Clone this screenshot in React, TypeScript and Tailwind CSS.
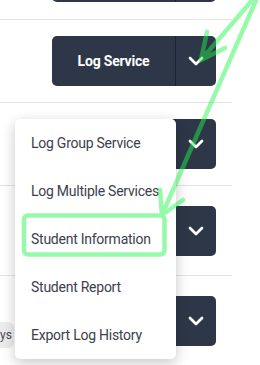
import React from "react";
import { ChevronDown } from "lucide-react";

function SplitButton({ label }: { label?: string }) {
  return (
    <div className="flex h-[50px] w-[164px] shrink-0 rounded-[5px] bg-[#2d3748] text-white">
      <div className="flex w-[123px] items-center justify-center whitespace-nowrap text-[14px] font-bold tracking-[-0.2px]">
        {label}
      </div>
      <div className="flex flex-1 items-center justify-center border-l border-[#1c2330]">
        <ChevronDown size={24} strokeWidth={2.75} />
      </div>
    </div>
  );
}

const items = [
  "Log Group Service",
  "Log Multiple Services",
  "Student Information",
  "Student Report",
  "Export Log History",
];

export default function App() {
  return (
    <div
      className="relative h-[365px] w-[260px] overflow-hidden bg-white"
      style={{ fontFamily: "Roboto, 'Liberation Sans', sans-serif" }}
    >
      <div className="w-[232px]">
        <div className="flex h-[20px] items-end justify-end overflow-hidden border-b border-[#e3e3e3] pb-[17px] pr-4">
          <SplitButton />
        </div>
        <div className="flex justify-end border-b border-[#e3e3e3] py-4 pr-4">
          <SplitButton label="Log Service" />
        </div>
        <div className="flex justify-end border-b border-[#e3e3e3] py-4 pr-4">
          <SplitButton />
        </div>
        <div className="flex h-[90px] justify-end border-b border-[#e3e3e3] pt-5 pr-4">
          <SplitButton />
        </div>
        <div className="flex items-start justify-between pt-5 pr-4">
          <span className="mt-[26px] flex h-[26px] items-center rounded-r-md bg-[#ececec] pr-[2px] text-[12px] text-[#4a4d57]">
            ys
          </span>
          <SplitButton />
        </div>
      </div>

      <div className="absolute left-[15px] top-[119px] w-[161px] rounded-[5px] bg-white shadow-[0_4px_14px_rgba(0,0,0,0.22)]">
        {items.map((t) => (
          <div
            key={t}
            className="flex h-[48px] items-center whitespace-nowrap px-4 text-[14px] tracking-[-0.25px] text-[#3d404c]"
          >
            {t}
          </div>
        ))}
      </div>

      <svg
        className="pointer-events-none absolute inset-0"
        width="260"
        height="365"
        viewBox="0 0 260 365"
      >
        <g
          opacity="0.47"
          stroke="#22f54c"
          strokeWidth="4.5"
          strokeLinecap="round"
          strokeLinejoin="round"
          fill="none"
        >
          <path d="M254 -2 L201 60 M207 32 L201 60 L225 48" />
          <path d="M257 -2 L162 215 M160 190 L162 215 L183 200" />
          <rect x="24" y="215.5" width="140.5" height="39" rx="4" />
        </g>
      </svg>
    </div>
  );
}
